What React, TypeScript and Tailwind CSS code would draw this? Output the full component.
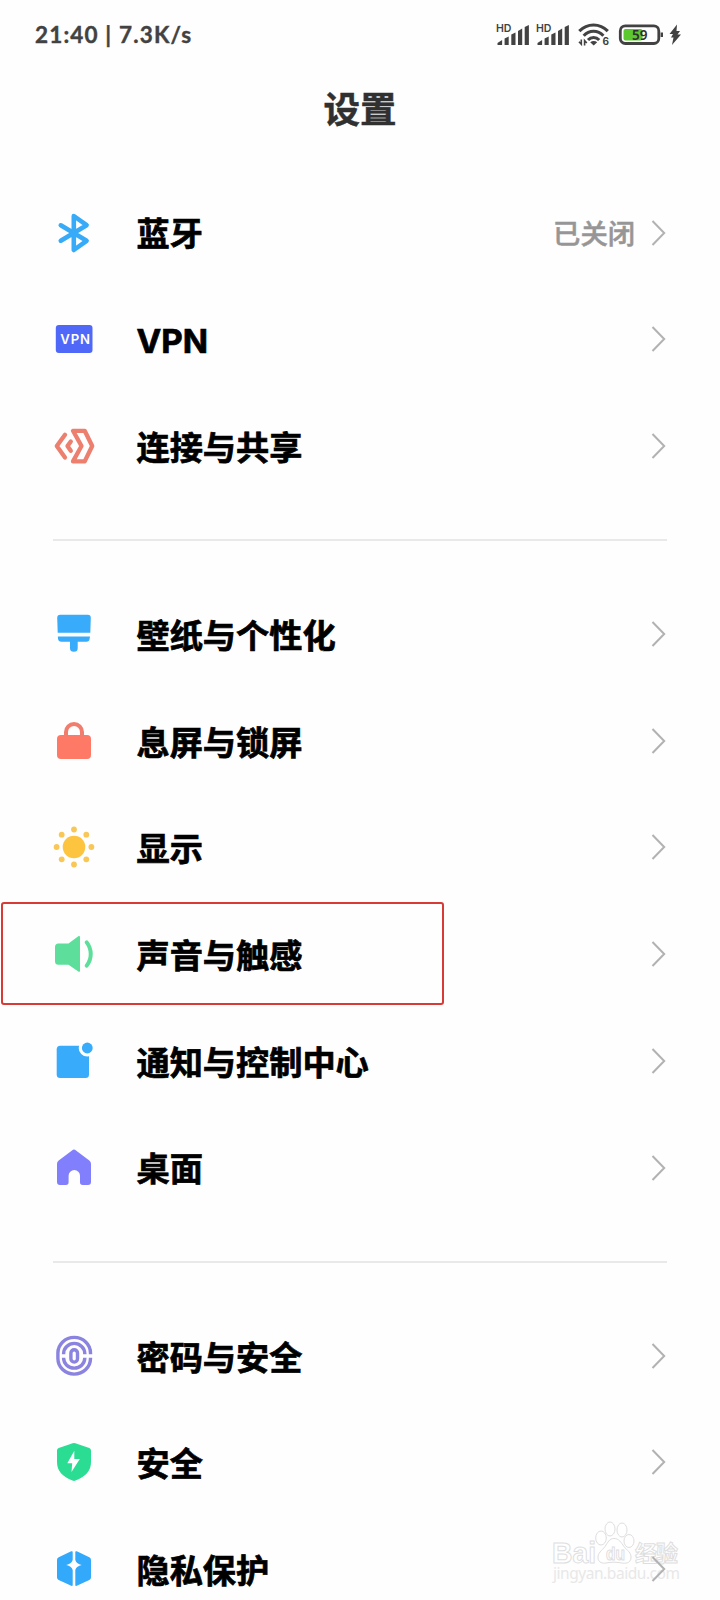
import React from 'react';
import cn from 'clsx';

const Icon = ({ children }: { children: React.ReactNode }) => (
  <svg className="w-12 h-12 shrink-0" viewBox="0 0 48 48" fill="none">
    {children}
  </svg>
);

const BluetoothIcon = () => (
  <Icon>
    <path
      d="M10.8 16.3 36.6 31.8 23.8 41V7L36.6 16.2 10.8 31.7"
      stroke="#38abf8"
      strokeWidth={4.6}
      strokeLinecap="round"
      strokeLinejoin="round"
    />
  </Icon>
);

const VpnIcon = () => (
  <Icon>
    <rect x="5.8" y="10" width="36.7" height="28" rx="3" fill="#5068f8" />
    <text
      x="10.3"
      y="29"
      fill="#fff"
      className="font-['Inter',sans-serif] text-[13.2px] font-semibold tracking-[0.8px]"
    >
      VPN
    </text>
  </Icon>
);

const ShareIcon = () => (
  <Icon>
    <g
      stroke="#ec7f6e"
      strokeWidth={4.3}
      strokeLinecap="round"
      strokeLinejoin="round"
    >
      <path d="M15 12.8 6.8 24 15 35.4" />
      <path d="M20.8 19.4 17.5 24l3.3 4.7" />
      <path d="M23 8.8h11.7L42.2 24l-7.5 15.4H23L31.5 24Z" />
    </g>
  </Icon>
);

const WallpaperIcon = () => (
  <Icon>
    <path
      fill="#38abfa"
      d="M10.2 4.8h27.6a3 3 0 0 1 3 3l-.5 15H7.7l-.5-15a3 3 0 0 1 3-3ZM7.8 26.6h32.2l-.4 2.5a3.2 3.2 0 0 1-3.2 2.7h-8.7v6.2a3.85 3.85 0 0 1-7.7 0v-6.2h-8.7a3.2 3.2 0 0 1-3.2-2.7Z"
    />
  </Icon>
);

const LockIcon = () => (
  <Icon>
    <rect x="7" y="18" width="34" height="24" rx="4" fill="#ff7a66" />
    <path d="M16 20v-5a8 8 0 0 1 16 0v5" stroke="#f07d6e" strokeWidth={4} />
  </Icon>
);

const SUN_DOTS = [
  [24, 6.5],
  [36.3, 11.7],
  [41.4, 24],
  [36.3, 36.3],
  [24, 41.5],
  [11.7, 36.3],
  [6.6, 24],
  [11.7, 11.7],
];

const SunIcon = () => (
  <Icon>
    <circle cx="24" cy="24" r="11.3" fill="#fdc440" />
    {SUN_DOTS.map(([x, y]) => (
      <circle key={`${x}-${y}`} cx={x} cy={y} r="2.9" fill="#f9c757" />
    ))}
  </Icon>
);

const SoundIcon = () => (
  <Icon>
    <path
      fill="#5ddf9b"
      d="M8.5 13.4h10L28.3 6.2c.8-.6 1.7-.2 1.7.8v33.8c0 1-.9 1.400-1.700.8L18.5 34.700H8.500A3.500 3.500 0 0 1 5 31.200V16.900a3.500 3.500 0 0 1 3.500-3.500Z"
    />
    <path
      d="M36.7 12.4c5.4 7 5.4 16.2 0 23.2"
      stroke="#5ddf9b"
      strokeWidth={4}
      strokeLinecap="round"
    />
  </Icon>
);

const NotificationIcon = () => (
  <Icon>
    <rect x="6.7" y="8.7" width="32.3" height="32.3" rx="3.5" fill="#38abfa" />
    <circle cx="37.3" cy="11" r="8.6" fill="#fefefe" />
    <circle cx="37.3" cy="11" r="5.4" fill="#38abfa" />
  </Icon>
);

const HomeIcon = () => (
  <Icon>
    <path
      fill="#827ffc"
      d="M22 6.400a3.200 3.200 0 0 1 4 0l13.300 10.200A4 4 0 0 1 41 20v18a3 3 0 0 1-3 3h-5.300a2.700 2.700 0 0 1-2.700-2.700v-6.600a5.700 5.700 0 0 0-11.400 0v6.600A2.700 2.700 0 0 1 15.900 41H10a3 3 0 0 1-3-3V20a4 4 0 0 1 1.700-3.400Z"
    />
  </Icon>
);

const FingerprintIcon = () => (
  <Icon>
    <g stroke="#8b83e0" strokeWidth={3.4}>
      <path d="M40.500 22.300V21A16.300 15.600 0 0 0 7.900 21v5.500a16.300 15.600 0 0 0 32.600 0V25.800" />
      <path d="M34.800 22.300v-.6a10.600 10.300 0 0 0-21.200 0v.6M13.600 25.800v.300a10.600 10 0 0 0 21.200 0v-.300" />
      <rect x="20.900" y="17.700" width="6.600" height="12.400" rx="3.300" />
    </g>
  </Icon>
);

const ShieldIcon = () => (
  <Icon>
    <path
      fill="#2bdc93"
      d="M22.7 5.3a4 4 0 0 1 2.600 0l14 4.800A2.500 2.500 0 0 1 41 12.500V24c0 9-5.500 14.600-15.500 18.600a4 4 0 0 1-3 0C12.500 38.600 7 33 7 24V12.500a2.500 2.500 0 0 1 1.700-2.400Z"
    />
    <path
      fill="#fff"
      d="M24.300 12.700 17.300 25.200h4.900l-.7 8.800 8.300-12.900h-5.500Z"
    />
  </Icon>
);

const PrivacyIcon = () => (
  <Icon>
    <path
      fill="#33a9fc"
      d="M21.200 6.300 8.700 12.200A3 3 0 0 0 7 14.900V32.500a3 3 0 0 0 1.700 2.600l12.500 5.700c.8.300 1.500-.1 1.500-.9V7.200c0-.8-.7-1.200-1.500-.9ZM26.800 6.300l12.500 5.900A3 3 0 0 1 41 14.900V32.500a3 3 0 0 1-1.700 2.600l-12.500 5.700c-.8.300-1.500-.1-1.500-.9V7.200c0-.8.7-1.200 1.500-.9Z"
    />
    <path
      fill="#fff"
      d="M24 11c.9 5.500 2.500 7.500 7.800 9C26.500 21.500 24.900 23.500 24 29c-.9-5.500-2.500-7.500-7.800-9C21.500 18.500 23.100 16.500 24 11Z"
    />
  </Icon>
);

const Chevron = () => (
  <svg className="w-4 h-7 shrink-0" viewBox="0 0 16 28" fill="none">
    <path d="M1.500 2 13.200 14 1.500 26" stroke="#b2b2b2" strokeWidth={2} />
  </svg>
);

const SignalIcon = () => (
  <svg className="w-[36px] h-[24px] overflow-visible" viewBox="0 0 36 24">
    <text
      x="0"
      y="9"
      textLength="15.500"
      lengthAdjust="spacingAndGlyphs"
      fill="#424242"
      className="font-['Inter',sans-serif] text-[11px] leading-none font-semibold"
    >
      HD
    </text>
    <g fill="#424242">
      <path d="M1.500 22v-2l4.600-3V22Z" />
      <path d="M8.600 22v-6.500l4.100-2V22Z" />
      <path d="M15.300 22V11.500l4.200-2V22Z" />
      <path d="M22 22V8l4.200-2.500V22Z" />
      <path d="M28.700 22V4l4.200-2V22Z" />
    </g>
  </svg>
);

const WifiIcon = () => (
  <svg className="w-[32px] h-[24px] overflow-visible" viewBox="0 0 32 24" fill="none">
    <g stroke="#424242" strokeWidth={3.1}>
      <path d="M1.300 8.200c8-8.200 20.500-8.200 28.500 0" />
      <path d="M5.700 12.700c5.600-6 14.100-6 19.700 0" />
      <path d="M10 17c3.200-3.400 8-3.400 11.200 0" />
    </g>
    <path d="M12.200 19.300c2-1.600 5-1.600 7 0l-3.500 3.200Z" fill="#424242" />
    <path
      d="M1 18.700 3.300 21.200V16.500M6.600 22.500V17.500L8.800 20"
      stroke="#424242"
      strokeWidth={1.6}
    />
    <text
      x="24.600"
      y="22"
      fill="#424242"
      className="font-['Inter',sans-serif] text-[10px] leading-none font-bold"
    >
      6
    </text>
  </svg>
);

const BatteryIcon = () => (
  <svg className="w-[66px] h-[24px]" viewBox="0 0 66 24" fill="none">
    <rect
      x="2.300"
      y="2.900"
      width="38.500"
      height="17.600"
      rx="5"
      stroke="#424242"
      strokeWidth={2.8}
    />
    <rect x="5.500" y="6" width="19" height="11.500" rx="2" fill="#5bc92d" />
    <path d="M43.800 9.500v4.500" stroke="#424242" strokeWidth={2.4} />
    <text
      x="14"
      y="17"
      textLength="15.500"
      lengthAdjust="spacingAndGlyphs"
      fill="#303030"
      className="font-['Noto_Sans',sans-serif] text-[14.500px] leading-none font-semibold"
    >
      59
    </text>
    <path
      d="M59 1.500 51.500 11h3.500l-2 3.500h2.500L54 22 63 11.500h-3.500L62 8h-3.500Z"
      fill="#424242"
    />
  </svg>
);

const StatusBar = () => (
  <div className="flex items-center justify-between h-[70px] pl-[35px] pr-[36px] text-[#424242]">
    <span className="font-['Lato',sans-serif] text-[22.500px] font-bold tracking-[1.150px] [-webkit-text-stroke:0.400px_#424242]">
      21:40 | 7.3K/s
    </span>
    <div className="flex items-center">
      <div className="flex gap-1 mr-1.5">
        <SignalIcon />
        <SignalIcon />
      </div>
      <WifiIcon />
      <div className="ml-2">
        <BatteryIcon />
      </div>
    </div>
  </div>
);

type Item = {
  label: string;
  icon: React.ReactNode;
  value?: string;
  marked?: boolean;
};

const GROUPS: Item[][] = [
  [
    { label: '蓝牙', icon: <BluetoothIcon />, value: '已关闭' },
    { label: 'VPN', icon: <VpnIcon /> },
    { label: '连接与共享', icon: <ShareIcon /> },
  ],
  [
    { label: '壁纸与个性化', icon: <WallpaperIcon /> },
    { label: '息屏与锁屏', icon: <LockIcon /> },
    { label: '显示', icon: <SunIcon /> },
    { label: '声音与触感', icon: <SoundIcon />, marked: true },
    { label: '通知与控制中心', icon: <NotificationIcon /> },
    { label: '桌面', icon: <HomeIcon /> },
  ],
  [
    { label: '密码与安全', icon: <FingerprintIcon /> },
    { label: '安全', icon: <ShieldIcon /> },
    { label: '隐私保护', icon: <PrivacyIcon /> },
  ],
];

const SettingRow = ({ label, icon, value, marked }: Item) => {
  return (
    <div className="relative flex items-center h-[106.700px] pl-[50px] pr-[53px]">
      {icon}
      <span className="ml-[38.500px] pt-[5px] flex-1 font-['Inter','Noto_Sans_CJK_SC',sans-serif] text-[33.200px] leading-none font-bold text-black [-webkit-text-stroke:0.700px_#000]">
        {label}
      </span>
      {value && (
        <span className="mr-4 pt-px text-[27.300px] leading-none font-medium text-[#969696] [-webkit-text-stroke:0.500px_#969696]">
          {value}
        </span>
      )}
      <Chevron />
      {marked && (
        <div className="absolute left-[1px] top-[1px] w-[443px] h-[103px] border-2 border-[#d63b35] rounded-[3px]" />
      )}
    </div>
  );
};

const Watermark = () => (
  <div className="absolute left-[546px] top-[1518px]">
    <svg
      className="w-[150px] h-[70px]"
      viewBox="0 0 150 70"
      fill="#fff"
      stroke="#dedede"
    >
      <g className="font-['Liberation_Sans','Noto_Sans_CJK_SC',sans-serif] leading-none font-bold">
        <text
          x="6"
          y="44.500"
          textLength="44"
          lengthAdjust="spacingAndGlyphs"
          className="text-[29px]"
        >
          Bai
        </text>
        <text x="89" y="43" textLength="43" className="text-[22px]">
          经验
        </text>
      </g>
      <ellipse cx="55" cy="20" rx="5.3" ry="7" />
      <ellipse cx="64" cy="11" rx="5" ry="7" />
      <ellipse cx="76" cy="12" rx="5" ry="7" />
      <ellipse cx="83" cy="23" rx="5" ry="6.5" />
      <path d="M68 20.500c5 0 7 4 10 8s7.500 6 7 11.500-6 5.500-9 5-5-.8-8-.8-5 .3-8 .8-7.500 0-8-5 4-7.500 7-11.500 4-8 9-8Z" />
      <text
        x="60"
        y="41.500"
        textLength="19"
        lengthAdjust="spacingAndGlyphs"
        className="font-['Liberation_Sans',sans-serif] text-[18px] font-bold"
      >
        du
      </text>
      <text
        x="7"
        y="61"
        textLength="127"
        fill="#e8e8e8"
        stroke="none"
        className="font-['Noto_Sans',sans-serif] text-[15.500px]"
      >
        jingyan.baidu.com
      </text>
    </svg>
  </div>
);

export default function App() {
  return (
    <div className="relative w-[720px] h-[1600px] overflow-hidden bg-[#fefefe] font-['Noto_Sans_CJK_SC',sans-serif]">
      <StatusBar />
      <h1 className="flex items-center justify-center h-[76px] text-[36.500px] leading-none font-bold text-[#303030] [-webkit-text-stroke:0.500px_#303030]">
        设置
      </h1>
      <Watermark />
      <div className="relative pt-[33.200px]">
        {GROUPS.map((items, index) => (
          <div key={items[0].label}>
            <div
              className={cn(
                index === 0 && 'hidden',
                'px-[53px] pt-[40px] pb-[39.500px]'
              )}
            >
              <div className="h-[2px] bg-[#e9e9e9]" />
            </div>
            {items.map((item) => (
              <SettingRow key={item.label} {...item} />
            ))}
          </div>
        ))}
      </div>
    </div>
  );
}
